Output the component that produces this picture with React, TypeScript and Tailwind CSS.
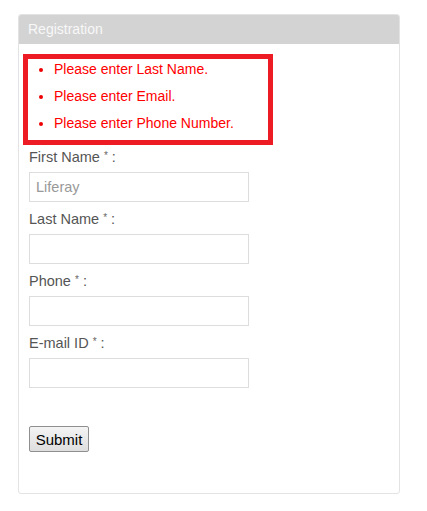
import React from "react";

const errors = ["Please enter Last Name.", "Please enter Email.", "Please enter Phone Number."];

const fields = [
  { label: "First Name", placeholder: "Liferay" },
  { label: "Last Name", placeholder: "" },
  { label: "Phone", placeholder: "" },
  { label: "E-mail ID", placeholder: "" },
];

export default function App() {
  return (
    <div className="min-h-[511px] bg-white pt-[14px] pl-[18px] font-['Liberation_Sans',Arial,sans-serif] text-[14px]">
      <div className="w-[382px] h-[480px] rounded-[3px] border border-[#e3e3e3] overflow-hidden">
        {/* header */}
        <div className="h-[30px] -mx-px -mt-px bg-[#d3d3d3] pl-[10px] flex items-center text-[#f8f8f8] leading-none rounded-t-[3px]">
          Registration
        </div>

        {/* errors */}
        <div className="ml-[4px] mt-[10px] w-[250px] border-[5px] border-[#ed1c24]">
          <ul className="list-disc pl-[26px] text-[#f00] leading-[20px]">
            {errors.map((e) => (
              <li key={e} className="pb-[7px] marker:text-[#e00]">
                {e}
              </li>
            ))}
          </ul>
        </div>

        {/* form */}
        <div className="pl-[10px] pt-[2px] text-[#555]">
          {fields.map((f) => (
            <div key={f.label} className="mb-[7px]">
              <div className="leading-[20px] mb-[5px] text-[14.5px]">
                {f.label} <sup className="text-[10px] text-[#666] relative top-[-3px]">*</sup> :
              </div>
              <input
                className="block w-[220px] h-[30px] border border-[#ddd] px-[6px] text-[14.5px] text-[#555] placeholder:text-[#999] outline-none"
                placeholder={f.placeholder}
              />
            </div>
          ))}
          <button className="mt-[31px] w-[60px] h-[26px] rounded-[2px] border border-[#8f8f8f] bg-gradient-to-b from-[#f4f4f4] to-[#dedede] text-[15px] text-black leading-none">
            Submit
          </button>
        </div>
      </div>
    </div>
  );
}
